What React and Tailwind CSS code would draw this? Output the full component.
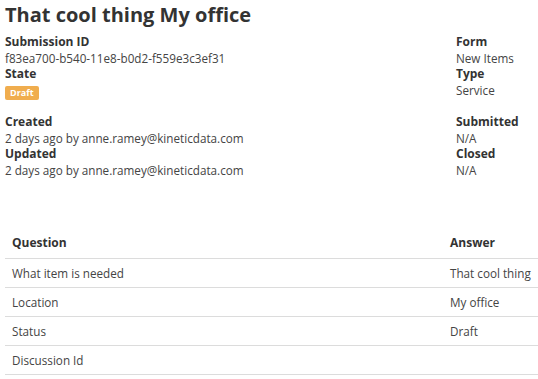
const DETAILS_TOP_LEFT = [
  ["Submission ID", "f83ea700-b540-11e8-b0d2-f559e3c3ef31"],
];
const ROWS = [
  ["What item is needed", "That cool thing"],
  ["Location", "My office"],
  ["Status", "Draft"],
  ["Discussion Id", ""],
];

function Field({ label, value, children }) {
  return (
    <div>
      <div className="font-bold text-[12px] text-[#333]">{label}</div>
      {children ? children : <div className="text-[11.7px] text-[#444]">{value}</div>}
    </div>
  );
}

export default function App() {
  return (
    <div
      className="w-[538px] h-[379px] bg-white text-[12px] leading-[16px] text-[#333] overflow-hidden"
      style={{ fontFamily: '"Open Sans", sans-serif' }}
    >
      <div className="pl-[5px]">
        <h1 className="text-[20px] leading-[30px] font-bold text-[#333]">That cool thing My office</h1>
        <div className="flex mt-[4px]">
          <div className="flex-1">
            {DETAILS_TOP_LEFT.map(([l, v]) => (
              <Field key={l} label={l} value={v} />
            ))}
            <Field label="State">
              <div className="pt-[2px]">
                <span className="inline-block bg-[#f0ad4e] text-white font-bold text-[9px] leading-[14px] px-[5px] rounded-[2px]">
                  Draft
                </span>
              </div>
            </Field>
          </div>
          <div className="w-[82px]">
            <Field label="Form" value="New Items" />
            <Field label="Type" value="Service" />
          </div>
        </div>
        <div className="flex mt-[14px]">
          <div className="flex-1">
            <Field label="Created" value="2 days ago by anne.ramey@kineticdata.com" />
            <Field label="Updated" value="2 days ago by anne.ramey@kineticdata.com" />
          </div>
          <div className="w-[82px]">
            <Field label="Submitted" value="N/A" />
            <Field label="Closed" value="N/A" />
          </div>
        </div>
        <table className="w-full mt-[50px] border-collapse">
          <thead>
            <tr className="border-b border-[#dcdcdc]">
              <th className="text-left font-bold pl-[7px] h-[30px] text-[#333]">Question</th>
              <th className="text-left font-bold w-[88px] text-[#333]">Answer</th>
            </tr>
          </thead>
          <tbody>
            {ROWS.map(([q, a]) => (
              <tr key={q} className="border-b border-[#dcdcdc] text-[11.7px]">
                <td className="pl-[7px] h-[29px] text-[#444]">{q}</td>
                <td className="text-[#444]">{a}</td>
              </tr>
            ))}
          </tbody>
        </table>
      </div>
    </div>
  );
}
